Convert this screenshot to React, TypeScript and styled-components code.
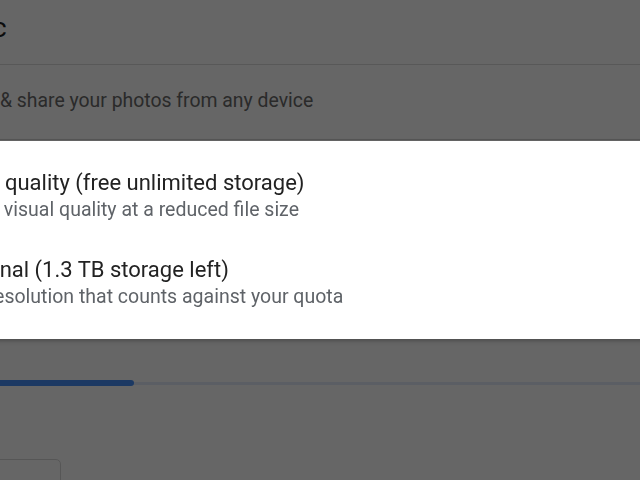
import styled, { createGlobalStyle } from 'styled-components'

const GlobalStyle = createGlobalStyle`
  html, body {
    margin: 0;
    padding: 0;
    background: #ffffff;
    overflow: hidden;
  }
  body {
    font-family: Roboto, 'Noto Sans', Arial, sans-serif;
  }
`

type Option = {
  title: string
  description: string
}

const options: Option[] = [
  {
    title: 'High quality (free unlimited storage)',
    description: 'Great visual quality at a reduced file size',
  },
  {
    title: 'Original (1.3 TB storage left)',
    description: 'Full resolution that counts against your quota',
  },
]

const usedPercent = 21

function App() {
  return (
    <>
      <GlobalStyle />
      <Page>
        <Header>
          <HeaderTitle>Back up &amp; sync</HeaderTitle>
        </Header>
        <SettingRow>
          <SettingText>Store, organize &amp; share your photos from any device</SettingText>
        </SettingRow>
        <HiddenSection />
        <StorageSection>
          <ProgressTrack>
            <ProgressFill style={{ width: `${usedPercent}%` }} />
          </ProgressTrack>
        </StorageSection>
        <ActionRow>
          <OutlineButton>Buy storage</OutlineButton>
        </ActionRow>
      </Page>
      <Scrim />
      <Dialog role="dialog">
        <OptionList>
          {options.map((option) => (
            <OptionItem key={option.title}>
              <OptionTitle>{option.title}</OptionTitle>
              <OptionDescription>{option.description}</OptionDescription>
            </OptionItem>
          ))}
        </OptionList>
      </Dialog>
    </>
  )
}

export default App

const Page = styled.div`
  display: flex;
  flex-direction: column;
  width: 640px;
  background: #ffffff;

  & > * {
    flex-shrink: 0;
  }
`

const Header = styled.header`
  display: flex;
  align-items: center;
  height: 65px;
  padding-bottom: 10px;
  border-bottom: 1px solid #dcdcdc;
  box-sizing: border-box;
`

const HeaderTitle = styled.h1`
  margin: 0 0 0 -182px;
  font-size: 28px;
  font-weight: 400;
  color: #1f1f1f;
  white-space: nowrap;
`

const SettingRow = styled.div`
  display: flex;
  align-items: center;
  height: 75px;
  padding-bottom: 4px;
  border-bottom: 1px solid #d4d4d4;
  box-sizing: border-box;
`

const SettingText = styled.div`
  margin-left: -133px;
  font-size: 19.4px;
  color: #6a6a6a;
  white-space: nowrap;
`

const HiddenSection = styled.div`
  height: 240px;
`

const StorageSection = styled.div`
  display: flex;
  align-items: center;
  height: 6px;
`

const ProgressTrack = styled.div`
  flex: 1;
  height: 3px;
  background: #e4ecfa;
  display: flex;
  align-items: center;
`

const ProgressFill = styled.div`
  height: 6px;
  background: #4690f8;
  border-radius: 0 3px 3px 0;
`

const ActionRow = styled.div`
  display: flex;
  padding-top: 73px;
`

const OutlineButton = styled.button`
  margin-left: -60px;
  width: 121px;
  height: 40px;
  border: 1.5px solid #d8d8d8;
  border-radius: 5px;
  background: #ffffff;
  color: #ffffff;
  font-family: inherit;
  font-size: 16px;
`

const Scrim = styled.div`
  position: fixed;
  inset: 0;
  background: rgba(0, 0, 0, 0.6);
`

const Dialog = styled.div`
  position: fixed;
  top: 141px;
  left: -120px;
  right: -40px;
  height: 198px;
  background: #ffffff;
  box-shadow: 0 2px 4px rgba(0, 0, 0, 0.25);
`

const OptionList = styled.div`
  display: flex;
  flex-direction: column;
  gap: 35px;
  padding: 29px 0 0 72px;
`

const OptionItem = styled.div`
  display: flex;
  flex-direction: column;
  gap: 2px;
`

const OptionTitle = styled.div`
  margin-left: 2px;
  font-size: 22px;
  line-height: 26px;
  color: #222222;
  white-space: nowrap;
`

const OptionDescription = styled.div`
  font-size: 19.5px;
  line-height: 24px;
  color: #5f6368;
  white-space: nowrap;
`
